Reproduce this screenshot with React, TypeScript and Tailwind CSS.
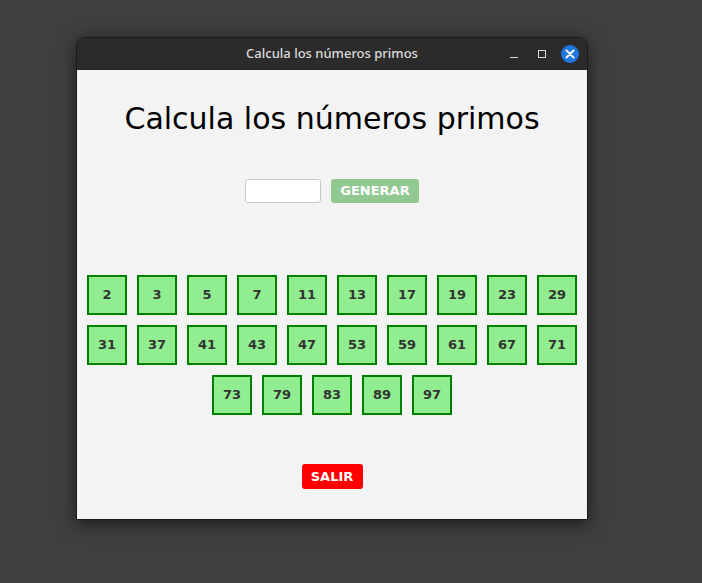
import React from "react";

const primes = [2,3,5,7,11,13,17,19,23,29,31,37,41,43,47,53,59,61,67,71,73,79,83,89,97];

export default function App() {
  return (
    <div className="w-[702px] h-[583px] bg-[#3f3f3f] relative overflow-hidden" style={{ fontFamily: '"DejaVu Sans", sans-serif' }}>
      <div className="absolute left-[76px] top-[37px] w-[512px] h-[483px] rounded-t-[8px] border border-[#1a1a1a] shadow-[0_4px_18px_rgba(0,0,0,0.55)] flex flex-col overflow-hidden">
        <div className="h-[32px] bg-[#2b2b2b] flex items-center relative shrink-0">
          <div className="flex-1 text-center text-[13px] text-[#dcdcdc] font-medium" style={{ fontFamily: '"Noto Sans", sans-serif' }}>Calcula los números primos</div>
          <div className="absolute right-[3px] top-[6px] flex items-center gap-[0px]">
            <div className="w-[28px] h-[20px] flex items-center justify-center">
              <div className="w-[8px] h-[1px] bg-[#ddd] mt-[6px]"></div>
            </div>
            <div className="w-[28px] h-[20px] flex items-center justify-center">
              <div className="w-[8px] h-[8px] border border-[#ddd]"></div>
            </div>
            <div className="w-[28px] h-[20px] flex items-center justify-center">
              <div className="w-[18px] h-[18px] rounded-full bg-[#1f76de] flex items-center justify-center">
                <svg width="10" height="10" viewBox="0 0 10 10"><path d="M1.5 1.5 L8.5 8.5 M8.5 1.5 L1.5 8.5" stroke="white" strokeWidth="2" strokeLinecap="round" /></svg>
              </div>
            </div>
          </div>
        </div>
        <div className="flex-1 bg-[#f3f3f3] flex flex-col items-center">
          <h1 className="mt-[31px] text-[30px] leading-[36px] text-black">Calcula los números primos</h1>
          <div className="mt-[42px] flex items-center gap-[10px]">
            <input className="w-[76px] h-[24px] bg-white border border-[#c8c8c8] rounded-[3px] outline-none" />
            <button className="w-[88px] h-[24px] bg-[#92c892] rounded-[3px] text-white font-bold text-[13px]">GENERAR</button>
          </div>
          <div className="mt-[72px] w-[490px] flex flex-wrap justify-center gap-[10px]">
            {primes.map((p) => (
              <div key={p} className="w-[40px] h-[40px] bg-[#90ee90] border-2 border-[#008000] flex items-center justify-center text-[13px] font-bold text-[#333]">{p}</div>
            ))}
          </div>
          <button className="mt-[49px] w-[61px] h-[25px] bg-[#ff0000] rounded-[3px] text-white font-bold text-[13px]">SALIR</button>
        </div>
      </div>
    </div>
  );
}
